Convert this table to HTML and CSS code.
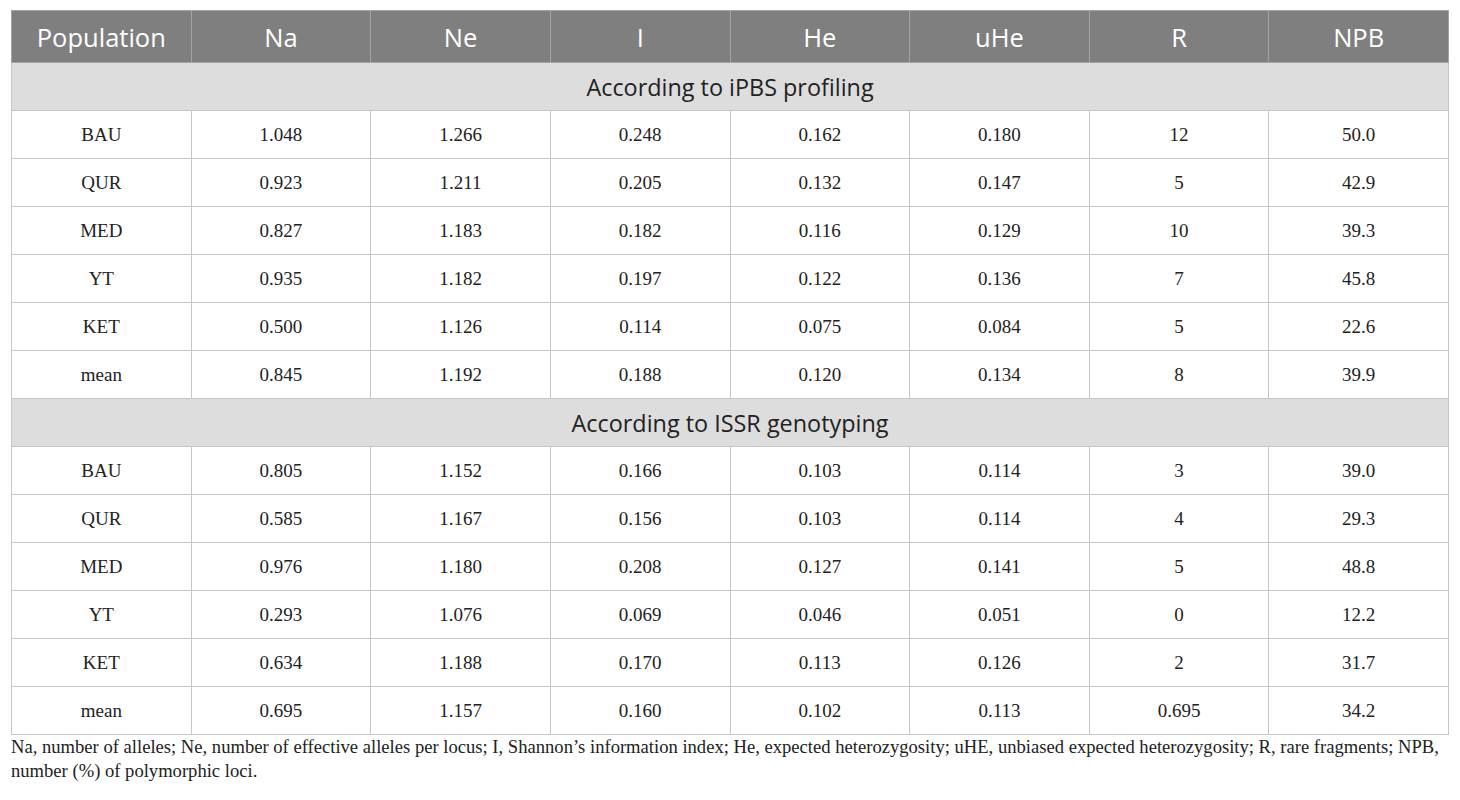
FILE: index.html
```html
<!DOCTYPE html>
<html lang="en">
<head>
    <meta charset="UTF-8">
    <title>Genetic diversity by population</title>
    <link rel="stylesheet" href="styles.css">
</head>
<body>
    <div class="wrap">
        <table class="stats">
            <thead>
                <tr>
                    <th>Population</th>
                    <th>Na</th>
                    <th>Ne</th>
                    <th>I</th>
                    <th>He</th>
                    <th>uHe</th>
                    <th>R</th>
                    <th>NPB</th>
                </tr>
            </thead>
            <tbody>
                <tr class="group"><td colspan="8">According to iPBS profiling</td></tr>
                <tr><td>BAU</td><td>1.048</td><td>1.266</td><td>0.248</td><td>0.162</td><td>0.180</td><td>12</td><td>50.0</td></tr>
                <tr><td>QUR</td><td>0.923</td><td>1.211</td><td>0.205</td><td>0.132</td><td>0.147</td><td>5</td><td>42.9</td></tr>
                <tr><td>MED</td><td>0.827</td><td>1.183</td><td>0.182</td><td>0.116</td><td>0.129</td><td>10</td><td>39.3</td></tr>
                <tr><td>YT</td><td>0.935</td><td>1.182</td><td>0.197</td><td>0.122</td><td>0.136</td><td>7</td><td>45.8</td></tr>
                <tr><td>KET</td><td>0.500</td><td>1.126</td><td>0.114</td><td>0.075</td><td>0.084</td><td>5</td><td>22.6</td></tr>
                <tr><td>mean</td><td>0.845</td><td>1.192</td><td>0.188</td><td>0.120</td><td>0.134</td><td>8</td><td>39.9</td></tr>
                <tr class="group"><td colspan="8">According to ISSR genotyping</td></tr>
                <tr><td>BAU</td><td>0.805</td><td>1.152</td><td>0.166</td><td>0.103</td><td>0.114</td><td>3</td><td>39.0</td></tr>
                <tr><td>QUR</td><td>0.585</td><td>1.167</td><td>0.156</td><td>0.103</td><td>0.114</td><td>4</td><td>29.3</td></tr>
                <tr><td>MED</td><td>0.976</td><td>1.180</td><td>0.208</td><td>0.127</td><td>0.141</td><td>5</td><td>48.8</td></tr>
                <tr><td>YT</td><td>0.293</td><td>1.076</td><td>0.069</td><td>0.046</td><td>0.051</td><td>0</td><td>12.2</td></tr>
                <tr><td>KET</td><td>0.634</td><td>1.188</td><td>0.170</td><td>0.113</td><td>0.126</td><td>2</td><td>31.7</td></tr>
                <tr><td>mean</td><td>0.695</td><td>1.157</td><td>0.160</td><td>0.102</td><td>0.113</td><td>0.695</td><td>34.2</td></tr>
            </tbody>
        </table>
        <p class="note">Na, number of alleles; Ne, number of effective alleles per locus; I, Shannon&rsquo;s information index; He, expected heterozygosity; uHE, unbiased expected heterozygosity; R, rare fragments; NPB, number (%) of polymorphic loci.</p>
    </div>
</body>
</html>
```

FILE: styles.css
```css
* {
    margin: 0;
    padding: 0;
    box-sizing: border-box;
}

body {
    background: #ffffff;
    color: #222;
    padding: 10px 11px;
}

.wrap {
    width: 1438px;
}

/* Table */
.stats {
    width: 100%;
    border-collapse: collapse;
    table-layout: fixed;
    border: 1px solid #c6c6c6;
}

.stats th,
.stats td {
    border: 1px solid #c6c6c6;
    text-align: center;
    vertical-align: middle;
}

.stats th {
    background: #7f7f7f;
    color: #fff;
    font-family: "Open Sans", sans-serif;
    font-size: 25.5px;
    font-weight: 400;
    height: 52px;
    border-color: #a4a4a4;
}

.stats td {
    font-family: "Liberation Serif", serif;
    font-size: 19px;
    height: 48px;
    color: #222;
}

.stats tr.group td {
    background: #dddddd;
    font-family: "Open Sans", sans-serif;
    font-size: 23.4px;
    color: #222;
}

.note {
    font-family: "Liberation Serif", serif;
    font-size: 18.6px;
    line-height: 24px;
    color: #222;
    margin-top: 0;
}
```
